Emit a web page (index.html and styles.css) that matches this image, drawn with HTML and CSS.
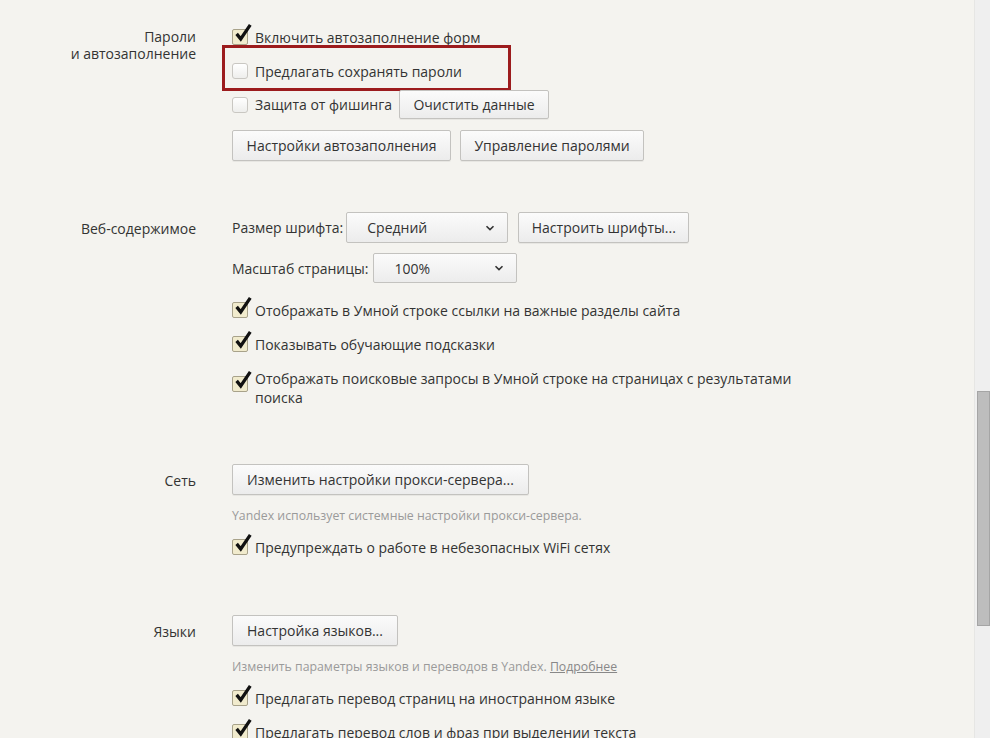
FILE: index.html
```html
<!DOCTYPE html>
<html lang="ru">
<head>
<meta charset="utf-8">
<title>Настройки</title>
<link rel="stylesheet" href="styles.css">
</head>
<body>
<div class="page">
  <main class="content">

    <section class="section s-passwords">
      <div class="label"><div>Пароли</div><div>и автозаполнение</div></div>
      <div class="body">
        <div class="row r1">
          <span class="cb checked"><svg viewBox="0 0 22 22" class="tick"><path d="M4 12 L8.5 17.5 L19 2" /></svg></span>
          <span class="text">Включить автозаполнение форм</span>
        </div>
        <div class="row r2 highlighted">
          <span class="cb"></span>
          <span class="text">Предлагать сохранять пароли</span>
          <span class="mark"></span>
        </div>
        <div class="row r3">
          <span class="cb"></span>
          <span class="text">Защита от фишинга</span>
          <button class="btn btn-clear">Очистить данные</button>
        </div>
        <div class="row r4">
          <button class="btn btn-auto">Настройки автозаполнения</button>
          <button class="btn btn-pass">Управление паролями</button>
        </div>
      </div>
    </section>

    <section class="section s-web">
      <div class="label">Веб-содержимое</div>
      <div class="body">
        <div class="row w1">
          <span class="text">Размер шрифта:</span>
          <div class="select sel-font"><span>Средний</span><svg viewBox="0 0 10 6" class="chev"><path d="M1.5 1.2 L5 4.6 L8.5 1.2"/></svg></div>
          <button class="btn btn-fonts">Настроить шрифты...</button>
        </div>
        <div class="row w2">
          <span class="text">Масштаб страницы:</span>
          <div class="select sel-zoom"><span>100%</span><svg viewBox="0 0 10 6" class="chev"><path d="M1.5 1.2 L5 4.6 L8.5 1.2"/></svg></div>
        </div>
        <div class="row w3">
          <span class="cb checked"><svg viewBox="0 0 22 22" class="tick"><path d="M4 12 L8.5 17.5 L19 2" /></svg></span>
          <span class="text">Отображать в Умной строке ссылки на важные разделы сайта</span>
        </div>
        <div class="row w4">
          <span class="cb checked"><svg viewBox="0 0 22 22" class="tick"><path d="M4 12 L8.5 17.5 L19 2" /></svg></span>
          <span class="text">Показывать обучающие подсказки</span>
        </div>
        <div class="row w5 multi">
          <span class="cb checked low"><svg viewBox="0 0 22 22" class="tick"><path d="M4 12 L8.5 17.5 L19 2" /></svg></span>
          <span class="text">Отображать поисковые запросы в Умной строке на страницах с результатами<br>поиска</span>
        </div>
      </div>
    </section>

    <section class="section s-net">
      <div class="label">Сеть</div>
      <div class="body">
        <div class="row n1">
          <button class="btn btn-proxy">Изменить настройки прокси-сервера...</button>
        </div>
        <div class="note n2">Yandex использует системные настройки прокси-сервера.</div>
        <div class="row n3">
          <span class="cb checked"><svg viewBox="0 0 22 22" class="tick"><path d="M4 12 L8.5 17.5 L19 2" /></svg></span>
          <span class="text">Предупреждать о работе в небезопасных WiFi сетях</span>
        </div>
      </div>
    </section>

    <section class="section s-lang">
      <div class="label">Языки</div>
      <div class="body">
        <div class="row l1">
          <button class="btn btn-lang">Настройка языков...</button>
        </div>
        <div class="note l2">Изменить параметры языков и переводов в Yandex. <a class="more">Подробнее</a></div>
        <div class="row l3">
          <span class="cb checked"><svg viewBox="0 0 22 22" class="tick"><path d="M4 12 L8.5 17.5 L19 2" /></svg></span>
          <span class="text">Предлагать перевод страниц на иностранном языке</span>
        </div>
        <div class="row l4">
          <span class="cb checked"><svg viewBox="0 0 22 22" class="tick"><path d="M4 12 L8.5 17.5 L19 2" /></svg></span>
          <span class="text">Предлагать перевод слов и фраз при выделении текста</span>
        </div>
      </div>
    </section>

  </main>
  <div class="scrollbar"><div class="thumb"></div></div>
</div>
</body>
</html>
```

FILE: styles.css
```css
* { box-sizing: border-box; }
html, body { margin: 0; padding: 0; height: 100%; }
body {
  background: #f4f3ef;
  color: #333;
  font-family: "Open Sans", "Noto Sans", "Liberation Sans", sans-serif;
  font-size: 14px;
  overflow: hidden;
}
.page {
  display: flex;
  height: 738px;
}
.content {
  flex: 1;
  padding-top: 22px;
}
.section {
  display: grid;
  grid-template-columns: 196px 1fr;
  column-gap: 36px;
}
.label {
  text-align: right;
  line-height: 17px;
  padding-top: 6px;
  color: #333;
}
.s-web .label { padding-top: 8px; }
.s-net .label { padding-top: 8px; }
.s-lang .label { padding-top: 8px; }

.row {
  display: flex;
  align-items: center;
  height: 30px;
  position: relative;
}
.text { white-space: nowrap; line-height: 19px; }

.r1 { height: 30px; }
.r2 { margin-top: 4px; }
.r3 { margin-top: 4px; height: 29px; }
.r4 { margin-top: 11px; height: 31px; gap: 9px; }

.s-web { margin-top: 51px; }
.w1 { height: 31px; }
.w2 { margin-top: 10px; }
.w3 { margin-top: 12px; }
.w4 { margin-top: 4px; }
.w5 { margin-top: 5px; height: auto; align-items: flex-start; padding-top: 5px; }

.s-net { margin-top: 57px; }
.n1 { height: 31px; }
.note {
  font-size: 12.3px;
  color: #9a9a9a;
  line-height: 17px;
  margin-top: 12px;
}
.n3 { margin-top: 8px; }

.s-lang { margin-top: 53px; }
.l1 { height: 31px; }
.l3 { margin-top: 8px; }
.l4 { margin-top: 4px; }
.more { color: #888; text-decoration: underline; }

/* checkbox */
.cb {
  position: relative;
  width: 16px;
  height: 16px;
  flex: none;
  margin-right: 7px;
  border: 1px solid #c9c7c2;
  border-radius: 3px;
  background: linear-gradient(#ffffff, #eeeeec);
}
.cb.checked {
  background: #f1ebcd;
  border-color: #a8a28a;
  border-radius: 2px;
}
.w5 .cb { margin-top: 7px; }
.tick {
  position: absolute;
  left: 0px;
  top: -7px;
  width: 20px;
  height: 20px;
  overflow: visible;
}
.tick path {
  fill: none;
  stroke: #111;
  stroke-width: 3.6;
  stroke-linecap: butt;
  stroke-linejoin: miter;
}

/* buttons */
.btn {
  font: inherit;
  color: #333;
  height: 100%;
  padding: 0;
  border: 1px solid #c3c2bf;
  border-radius: 2px;
  background: linear-gradient(#fbfbfb, #ececec);
  box-shadow: 0 1px 0 rgba(0,0,0,0.05);
  white-space: nowrap;
  cursor: default;
}
.btn-clear { margin-left: 7px; width: 150px; }
.btn-auto { width: 219px; }
.btn-pass { width: 184px; }
.btn-fonts { margin-left: 10px; width: 171px; }
.btn-proxy { width: 297px; }
.btn-lang { width: 166px; }

/* selects */
.select {
  height: 100%;
  display: flex;
  align-items: center;
  justify-content: space-between;
  border: 1px solid #c3c2bf;
  border-radius: 2px;
  background: linear-gradient(#fbfbfb, #ececec);
  padding: 0 12px 0 20px;
  margin-left: 3px;
}
.sel-font { width: 162px; }
.sel-zoom { width: 144px; margin-left: 5px; }
.chev { width: 10px; height: 6px; }
.chev path { fill: none; stroke: #333; stroke-width: 1.6; }

/* annotation highlight */
.mark {
  position: absolute;
  left: -10px;
  top: -11px;
  width: 289px;
  height: 46px;
  border: 3px solid #9c1b1d;
  pointer-events: none;
}

/* scrollbar */
.scrollbar {
  width: 16px;
  flex: none;
  background: #efefef;
  border-left: 1px solid #e6e6e4;
  position: relative;
}
.thumb {
  position: absolute;
  left: 2px;
  right: 0;
  top: 391px;
  height: 235px;
  background: #bdbdbd;
  border: 1px solid #a5a5a5;
}
```
